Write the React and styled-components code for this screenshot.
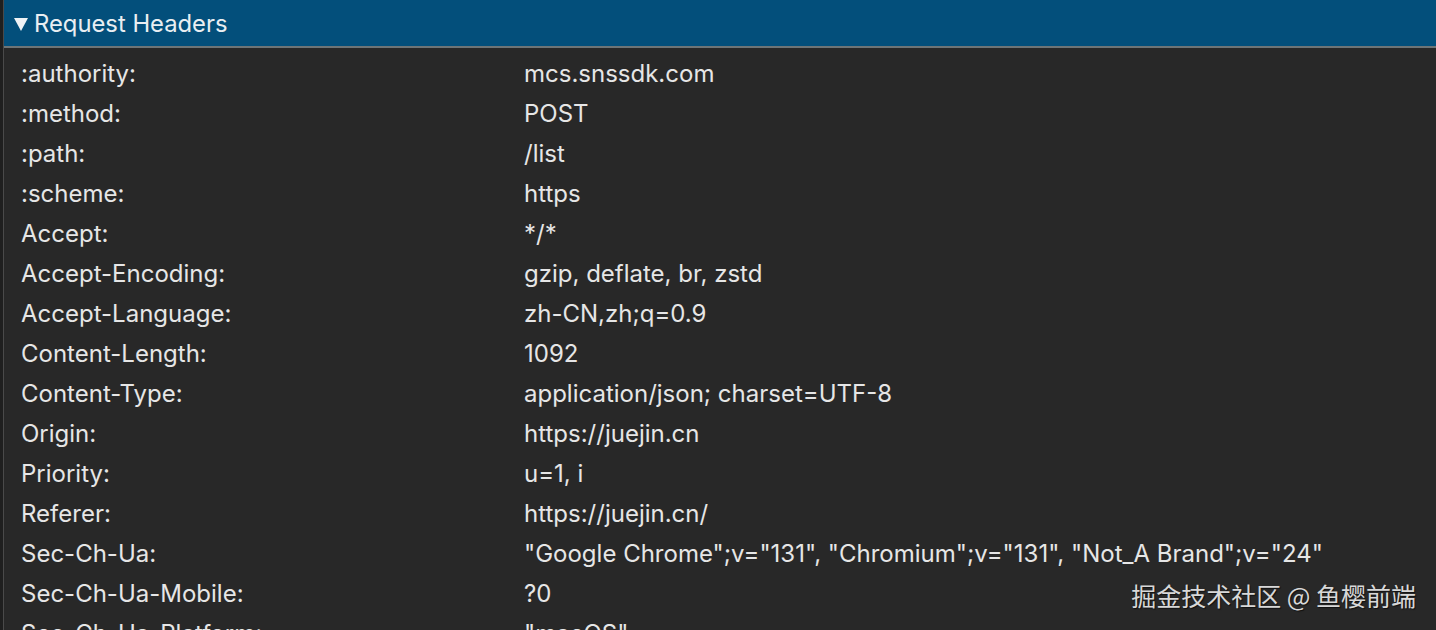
import React from "react";
import styled, { createGlobalStyle } from "styled-components";

const Global = createGlobalStyle`
  html, body { margin: 0; padding: 0; background: #282828; overflow: hidden; }
  body { font-family: Inter, "Liberation Sans", Arial, sans-serif; }
`;

const Page = styled.div`
  position: relative;
  width: 1436px;
  height: 630px;
  display: flex;
  background: #282828;
  overflow: hidden;
`;

const Gutter = styled.div`
  width: 3px;
  background: #1f1f1f;
  border-right: 1px solid #4a4a4a;
  flex: none;
`;

const Panel = styled.div`
  flex: 1;
  display: flex;
  flex-direction: column;
`;

const Header = styled.div`
  flex: none;
  height: 46px;
  background: #034f7b;
  border-bottom: 2px solid #6e7577;
  display: flex;
  align-items: center;
  padding-left: 10px;
  gap: 6px;
  color: #e9eef2;
  font-size: 23.8px;
`;

const Triangle = styled.span`
  width: 0;
  height: 0;
  border-left: 7px solid transparent;
  border-right: 7px solid transparent;
  border-top: 13px solid #eef2f5;
  margin-top: 2px;
`;

const Body = styled.div`
  padding-top: 5px;
  display: flex;
  flex-direction: column;
`;

const Row = styled.div`
  flex: none;
  height: 40px;
  display: grid;
  grid-template-columns: 503px 1fr;
  align-items: center;
  padding-left: 17px;
  color: #e6e6e6;
  font-size: 24px;
  white-space: nowrap;
`;

const Watermark = styled.div`
  position: absolute;
  right: 20px;
  bottom: 17px;
  font-family: "Noto Sans CJK SC", sans-serif;
  font-size: 25px;
  color: #d8d8d8;
  text-shadow: 1px 1px 1px rgba(0, 0, 0, 0.6);
`;

const rows = [
  [":authority:", "mcs.snssdk.com"],
  [":method:", "POST"],
  [":path:", "/list"],
  [":scheme:", "https"],
  ["Accept:", "*/*"],
  ["Accept-Encoding:", "gzip, deflate, br, zstd"],
  ["Accept-Language:", "zh-CN,zh;q=0.9"],
  ["Content-Length:", "1092"],
  ["Content-Type:", "application/json; charset=UTF-8"],
  ["Origin:", "https://juejin.cn"],
  ["Priority:", "u=1, i"],
  ["Referer:", "https://juejin.cn/"],
  ["Sec-Ch-Ua:", '"Google Chrome";v="131", "Chromium";v="131", "Not_A Brand";v="24"'],
  ["Sec-Ch-Ua-Mobile:", "?0"],
  ["Sec-Ch-Ua-Platform:", '"macOS"'],
];

export default function App() {
  return (
    <Page>
      <Global />
      <Gutter />
      <Panel>
        <Header>
          <Triangle />
          <span>Request Headers</span>
        </Header>
        <Body>
          {rows.map(([k, v]) => (
            <Row key={k}>
              <span>{k}</span>
              <span>{v}</span>
            </Row>
          ))}
        </Body>
      </Panel>
      <Watermark>掘金技术社区 @ 鱼樱前端</Watermark>
    </Page>
  );
}
